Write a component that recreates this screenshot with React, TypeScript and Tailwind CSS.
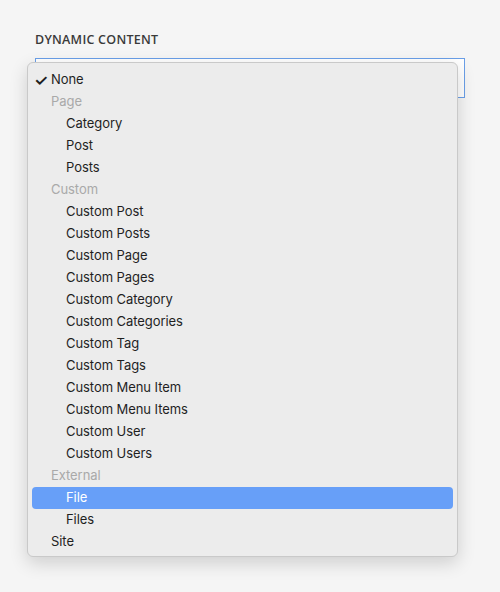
import React from "react";

type Row = { label: string; kind: "item" | "group" | "sub"; checked?: boolean; active?: boolean };

const rows: Row[] = [
  { label: "None", kind: "item", checked: true },
  { label: "Page", kind: "group" },
  { label: "Category", kind: "sub" },
  { label: "Post", kind: "sub" },
  { label: "Posts", kind: "sub" },
  { label: "Custom", kind: "group" },
  { label: "Custom Post", kind: "sub" },
  { label: "Custom Posts", kind: "sub" },
  { label: "Custom Page", kind: "sub" },
  { label: "Custom Pages", kind: "sub" },
  { label: "Custom Category", kind: "sub" },
  { label: "Custom Categories", kind: "sub" },
  { label: "Custom Tag", kind: "sub" },
  { label: "Custom Tags", kind: "sub" },
  { label: "Custom Menu Item", kind: "sub" },
  { label: "Custom Menu Items", kind: "sub" },
  { label: "Custom User", kind: "sub" },
  { label: "Custom Users", kind: "sub" },
  { label: "External", kind: "group" },
  { label: "File", kind: "sub", active: true },
  { label: "Files", kind: "sub" },
  { label: "Site", kind: "item" },
];

export default function App() {
  return (
    <div className="w-[500px] h-[592px] bg-[#f5f5f5] overflow-hidden" style={{ fontFamily: "Inter, 'Noto Sans', sans-serif" }}>
      <div className="pt-[33px] pl-[35px]">
        <div
          className="text-[12.5px] font-semibold tracking-[0.02em] text-[#3a3a3a] leading-[14px]"
          style={{ fontFamily: "'Open Sans', sans-serif" }}
        >
          DYNAMIC CONTENT
        </div>
        <div className="relative mt-[11px] w-[430px] h-[40px] border border-[#6a9fe8] bg-white">
          <div className="absolute left-[-9px] top-[3px] w-[431px] rounded-[6px] border border-[#c9c9c9] bg-[#ececec] pt-[6px] pb-[3px] shadow-[0_6px_18px_rgba(0,0,0,0.16)]">
            {rows.map((r) => (
              <div
                key={r.label}
                className={
                  "relative mx-[4px] h-[22px] rounded-[4px] flex items-center text-[13px] tracking-[-0.005em] " +
                  (r.active ? "bg-[#679ff8] text-white " : "") +
                  (r.kind === "group" ? "text-[#a9a9a9] pl-[19px]" : r.kind === "sub" ? "pl-[34px]" : "pl-[19px]") +
                  (r.kind !== "group" && !r.active ? " text-[#1f1f1f]" : "")
                }
              >
                {r.checked && (
                  <span className="absolute left-[2px] top-0 text-[16px] font-semibold leading-[22px]">✓</span>
                )}
                {r.label}
              </div>
            ))}
          </div>
        </div>
      </div>
    </div>
  );
}
